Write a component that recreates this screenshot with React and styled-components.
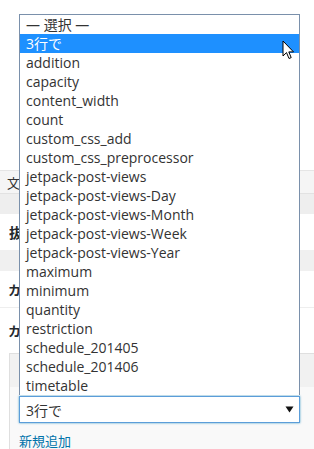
import React from "react";
import styled, { createGlobalStyle } from "styled-components";

const GlobalStyle = createGlobalStyle`
  body {
    margin: 0;
    background: #fff;
    font-family: "Open Sans", "Noto Sans CJK JP", sans-serif;
    color: #444;
  }
`;

const Page = styled.div`
  position: relative;
  width: 314px;
  height: 449px;
  overflow: hidden;
  display: flex;
  flex-direction: column;
`;

const Blank = styled.div`
  height: ${(p) => p.h}px;
  flex-shrink: 0;
  background: #fff;
`;

const Band = styled.div`
  height: ${(p) => p.h}px;
  flex-shrink: 0;
  box-sizing: border-box;
  background: ${(p) => p.bg};
  border-top: 1px solid ${(p) => p.line || p.bg};
  display: flex;
  align-items: center;
  padding-left: 7px;
  font-size: 13px;
  color: #333;
  font-family: "Noto Sans CJK JP", sans-serif;
`;

// labels sit under the open list, only their first glyph shows
const Label = styled.span`
  display: block;
  width: ${(p) => p.w}px;
  overflow: hidden;
  white-space: nowrap;
`;

const BoxHeading = styled.h3`
  margin: 0;
  height: 36px;
  flex-shrink: 0;
  display: flex;
  align-items: center;
  padding-left: 9px;
  font-size: 14px;
  font-weight: 700;
  color: #23282d;
  font-family: "Noto Sans CJK JP", sans-serif;
`;

const FieldRow = styled.div`
  height: ${(p) => p.h}px;
  flex-shrink: 0;
  box-sizing: border-box;
  display: flex;
  align-items: center;
  padding-left: 8px;
  border-bottom: ${(p) => (p.rule ? "1px solid #eee" : "none")};
  font-size: 13px;
  font-weight: 600;
  color: #23282d;
  font-family: "Noto Sans CJK JP", sans-serif;
`;

const FieldTable = styled.div`
  margin-left: 9px;
  flex: 1;
  border-left: 1px solid #dfdfdf;
  border-top: 1px solid #dfdfdf;
  display: flex;
  flex-direction: column;
`;

const TableHead = styled.div`
  height: 33px;
  background: #f1f1f1;
`;

const TableBody = styled.div`
  flex: 1;
  background: #f9f9f9;
  padding: 9px 0 0 9px;
`;

const SelectBox = styled.div`
  width: 281px;
  height: 27px;
  box-sizing: border-box;
  border: 1px solid #5b9dd9;
  box-shadow: 0 0 2px rgba(30, 140, 190, 0.8);
  background: #fff;
  display: flex;
  align-items: center;
  justify-content: space-between;
  padding: 0 5px 0 6px;
  font-size: 14px;
  color: #333;
`;

const NewLink = styled.a`
  display: block;
  margin-top: 8px;
  font-size: 13px;
  color: #0073aa;
  text-decoration: none;
  font-family: "Noto Sans CJK JP", sans-serif;
`;

const OptionList = styled.ul`
  position: absolute;
  left: 19px;
  top: 14px;
  width: 281px;
  box-sizing: border-box;
  margin: 0;
  padding: 0;
  list-style: none;
  background: #fff;
  border: 1px solid #7a90ab;
  border-bottom: none;
`;

const Option = styled.li`
  height: 19px;
  line-height: 19px;
  padding-left: 6px;
  font-size: 14px;
  white-space: nowrap;
  color: ${(p) => (p.active ? "#fff" : "#333")};
  background: ${(p) => (p.active ? "#1e90ff" : "transparent")};
`;

const Cursor = styled.svg`
  position: absolute;
  left: 282px;
  top: 40px;
`;

const options = [
  "— 選択 —",
  "3行で",
  "addition",
  "capacity",
  "content_width",
  "count",
  "custom_css_add",
  "custom_css_preprocessor",
  "jetpack-post-views",
  "jetpack-post-views-Day",
  "jetpack-post-views-Month",
  "jetpack-post-views-Week",
  "jetpack-post-views-Year",
  "maximum",
  "minimum",
  "quantity",
  "restriction",
  "schedule_201405",
  "schedule_201406",
  "timetable",
];

export default function App() {
  return (
    <>
      <GlobalStyle />
      <Page>
        <Blank h={170} />
        <Band h={23} bg="#f5f5f5" line="#e5e5e5">
          <Label w={12}>文字数</Label>
        </Band>
        <Band h={21} bg="#eeeeee" line="#e2e2e2" />
        <BoxHeading>
          <Label w={10}>抜粋</Label>
        </BoxHeading>
        <Band h={21} bg="#f0f0f0" />
        <FieldRow h={37} rule>
          <Label w={11}>カスタムフィールド</Label>
        </FieldRow>
        <FieldRow h={45}>
          <Label w={11}>カスタムフィールドを追加</Label>
        </FieldRow>
        <FieldTable>
          <TableHead />
          <TableBody>
            <SelectBox>
              <span>3行で</span>
              <svg width="9" height="7" viewBox="0 0 9 7">
                <path d="M0.5 0.5 H8.5 L4.5 6.5 Z" fill="#111" />
              </svg>
            </SelectBox>
            <NewLink href="#">新規追加</NewLink>
          </TableBody>
        </FieldTable>

        <OptionList>
          {options.map((o, i) => (
            <Option key={o} active={i === 1}>
              {o}
            </Option>
          ))}
        </OptionList>

        <Cursor width="13" height="21" viewBox="0 0 13 21">
          <path
            d="M1 1 L1 16 L4.5 12.6 L7 18.5 L9.2 17.6 L6.8 11.9 L11.5 11.9 Z"
            fill="#fff"
            stroke="#000"
            strokeWidth="1"
            strokeLinejoin="miter"
          />
        </Cursor>
      </Page>
    </>
  );
}
